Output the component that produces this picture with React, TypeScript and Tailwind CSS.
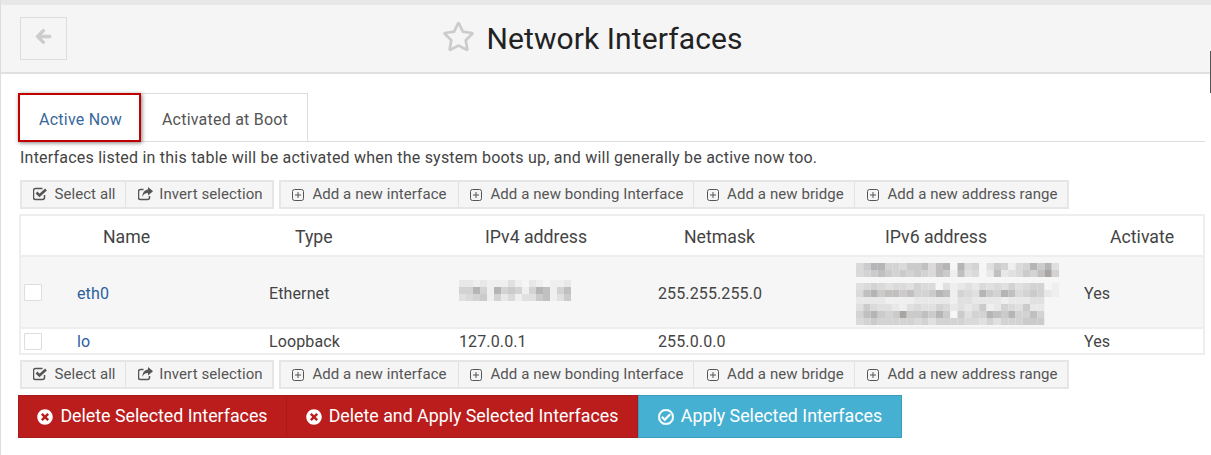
import { FaArrowLeft, FaRegCheckCircle, FaRegStar, FaTimesCircle } from "react-icons/fa";

const tones = ["#f6f6f6", "#efefef", "#e8e8e8", "#e0e0e0", "#dadada", "#d3d3d3", "#cbcbcb", "#c2c0be", "#b5b5b8", "#a8a4a2"];

function Mosaic({ rows, cell, className }: { rows: string[]; cell: number; className?: string }) {
  const cols = rows[0].length;
  return (
    <svg width={cols * cell} height={rows.length * 7} className={className}>
      {rows.map((row, y) =>
        row.split("").map((c, x) => (
          <rect key={x + "-" + y} x={x * cell} y={y * 7} width={cell} height={7} fill={tones[Number(c)]} />
        ))
      )}
    </svg>
  );
}

const ipv4Rows = [
  "2212111310210112",
  "5585185651587157",
  "3456152413367136",
];

const ipv6Top = [
  "4688554667478084503651458683",
  "4567656565476173402723465795",
];

const ipv6Bottom = [
  "3454344354403123243435345501",
  "4786776755687154386587456521",
  "2222111122222133222212223300",
  "3643321343354232361254362200",
  "5786569667686063558768557500",
  "4565555545355554435355566600",
];

function AddIcon() {
  return (
    <svg width="12" height="12" viewBox="0 0 12 12" fill="none" stroke="#555" strokeWidth="1" className="shrink-0">
      <rect x="0.5" y="0.5" width="11" height="11" rx="2" />
      <path d="M6 3v6M3 6h6" />
    </svg>
  );
}

function CheckIcon() {
  return (
    <svg width="15" height="14" viewBox="0 0 15 14" fill="none" stroke="#555" className="mt-[-2px] shrink-0">
      <path d="M11.5 8v2.5a2 2 0 0 1-2 2h-7a2 2 0 0 1-2-2v-7a2 2 0 0 1 2-2h7" strokeWidth="1.5" />
      <path d="M3.5 5.5 6.5 8.5 13 2.5" strokeWidth="2.6" />
    </svg>
  );
}

function ShareIcon() {
  return (
    <svg width="15" height="14" viewBox="0 0 15 14" className="mt-[-2px] shrink-0">
      <path d="M11.5 9v1.5a2 2 0 0 1-2 2h-7a2 2 0 0 1-2-2v-6a2 2 0 0 1 2-2h3" fill="none" stroke="#555" strokeWidth="1.5" />
      <path d="M10 0l5 4.2-5 4.2V6C7.5 6 5.5 6.8 4.5 10 4.2 6 6.5 3 10 2.6z" fill="#555" />
    </svg>
  );
}

function ToolButton({ icon, label, className }: { icon: React.ReactNode; label: string; className: string }) {
  return (
    <div className={`flex h-full items-center justify-center border-l border-[#e3e3e3] first:border-l-0 ${className}`}>
      {icon}
      <span>{label}</span>
    </div>
  );
}

function Toolbar() {
  return (
    <div className="ml-[19px] flex h-[29px] gap-[5px] text-[15px] tracking-[0.08px] text-[#555]">
      <div className="flex border-2 border-[#e6e6e6] bg-[#f5f5f5]">
        <ToolButton className="w-[103px] gap-[6px] pl-[2px]" icon={<CheckIcon />} label="Select all" />
        <ToolButton className="w-[147px] gap-[6px] pl-[3px]" icon={<ShareIcon />} label="Invert selection" />
      </div>
      <div className="flex border-2 border-[#e6e6e6] bg-[#f5f5f5]">
        <ToolButton className="w-[177px] gap-[8px]" icon={<AddIcon />} label="Add a new interface" />
        <ToolButton className="w-[235px] gap-[8px] pl-[2px]" icon={<AddIcon />} label="Add a new bonding Interface" />
        <ToolButton className="w-[161px] gap-[8px] pl-[3px]" icon={<AddIcon />} label="Add a new bridge" />
        <ToolButton className="w-[213px] gap-[8px] pl-[3px]" icon={<AddIcon />} label="Add a new address range" />
      </div>
    </div>
  );
}

function Checkbox() {
  return <div className="ml-[3px] h-[17px] w-[18px] rounded-[1px] border border-[#ddd] bg-white" />;
}

export default function App() {
  return (
    <div className="relative h-[455px] w-[1211px] overflow-hidden border-l border-[#ddd] bg-white font-['Roboto',sans-serif] text-[#444]">
      <div className="ml-[-1px] h-[5px] bg-[#e8e8e8]" />

      {/* title bar */}
      <div className="relative flex h-[69px] items-center justify-center border-b-2 border-[#e0e0e0] bg-[#f5f5f5]">
        <div className="absolute left-[19px] top-[12px] flex h-[43px] w-[47px] items-center justify-center border border-[#ddd]">
          <FaArrowLeft size={17} stroke="currentColor" strokeWidth={30} className="mt-[-4px] text-[#ccc]" />
        </div>
        <div className="ml-[-27px] flex items-center gap-[11px]">
          <FaRegStar size={33} className="mt-[-4px] text-[#ccc]" />
          <h1 className="text-[30px] tracking-[0.1px] text-[#222]">Network Interfaces</h1>
        </div>
      </div>
      <div className="absolute right-0 top-[51px] h-[42px] w-[1px] bg-[#555]" />

      {/* tabs */}
      <div className="mr-[6px] ml-[17px] mt-[19px] flex h-[49px] border-b border-[#ddd] text-[16px] tracking-[0.22px]">
        <div className="z-10 flex h-[49px] w-[123px] items-center justify-center border-2 border-[#c00000] pt-[5px] pl-[2px] text-[#38689b] shadow-[1px_1px_4px_rgba(0,0,0,0.5)]">
          Active Now
        </div>
        <div className="flex h-[48px] w-[167px] items-center justify-center border-t border-r border-[#ddd] pt-[5px] pl-[2px] text-[#555]">
          Activated at Boot
        </div>
      </div>

      <p className="ml-[19px] mt-[6px] text-[16px] leading-[20px] tracking-[0.22px] text-[#444]">
        Interfaces listed in this table will be activated when the system boots up, and will generally be active now too.
      </p>

      <div className="mt-[12px]">
        <Toolbar />
      </div>

      {/* interfaces table */}
      <table className="ml-[18px] mt-[5px] w-[1184px] table-fixed border-collapse text-[16px] tracking-[0.12px]">
        <colgroup>
          <col className="w-[53px]" />
          <col className="w-[192px]" />
          <col className="w-[190px]" />
          <col className="w-[199px]" />
          <col className="w-[199px]" />
          <col className="w-[227px]" />
          <col className="w-[124px]" />
        </colgroup>
        <thead>
          <tr className="h-[41px] border-2 border-[#eee] text-left text-[17.7px] tracking-normal">
            <th />
            <th className="pt-[3px] pl-[30px] font-normal">Name</th>
            <th className="pt-[3px] pl-[30px] font-normal">Type</th>
            <th className="pt-[3px] pl-[30px] font-normal">IPv4 address</th>
            <th className="pt-[3px] pl-[30px] font-normal">Netmask</th>
            <th className="pt-[3px] pl-[32px] font-normal">IPv6 address</th>
            <th className="pt-[3px] pl-[30px] font-normal">Activate</th>
          </tr>
        </thead>
        <tbody>
          <tr className="h-[72px] border-2 border-[#eee] bg-[#f6f6f6]">
            <td><Checkbox /></td>
            <td className="pt-[3px] pl-[4px] text-[#2c5f9e]">eth0</td>
            <td className="pt-[3px] pl-[4px]">Ethernet</td>
            <td className="pb-[3px] pl-[4px]"><Mosaic rows={ipv4Rows} cell={7} className="block" /></td>
            <td className="pt-[3px] pl-[4px]">255.255.255.0</td>
            <td className="pt-[3px] pl-[3px]">
              <Mosaic rows={ipv6Top} cell={7.25} className="mb-[6px] block" />
              <Mosaic rows={ipv6Bottom} cell={7.25} className="block" />
            </td>
            <td className="pt-[3px] pl-[4px]">Yes</td>
          </tr>
          <tr className="h-[26px] border-2 border-[#eee] leading-[20px]">
            <td><Checkbox /></td>
            <td className="pt-[1px] pl-[4px] text-[#2c5f9e]">lo</td>
            <td className="pt-[1px] pl-[4px]">Loopback</td>
            <td className="pt-[1px] pl-[4px]">127.0.0.1</td>
            <td className="pt-[1px] pl-[4px]">255.0.0.0</td>
            <td />
            <td className="pt-[1px] pl-[4px]">Yes</td>
          </tr>
        </tbody>
      </table>

      <div className="mt-[5px]">
        <Toolbar />
      </div>

      {/* action buttons */}
      <div className="ml-[17px] mt-[6px] flex h-[43px] text-[17.8px] text-white">
        <div className="flex w-[269px] items-center justify-center gap-[7px] border border-[#a81b1b] bg-[#bb1d1d]">
          <FaTimesCircle size={16} />
          Delete Selected Interfaces
        </div>
        <div className="flex w-[351px] items-center justify-center gap-[7px] border border-l-0 border-[#a81b1b] bg-[#bb1d1d]">
          <FaTimesCircle size={16} />
          Delete and Apply Selected Interfaces
        </div>
        <div className="flex w-[264px] items-center justify-center gap-[7px] border border-[#3d9dbd] bg-[#46b0d2]">
          <FaRegCheckCircle size={16} stroke="currentColor" strokeWidth={20} />
          Apply Selected Interfaces
        </div>
      </div>
    </div>
  );
}
